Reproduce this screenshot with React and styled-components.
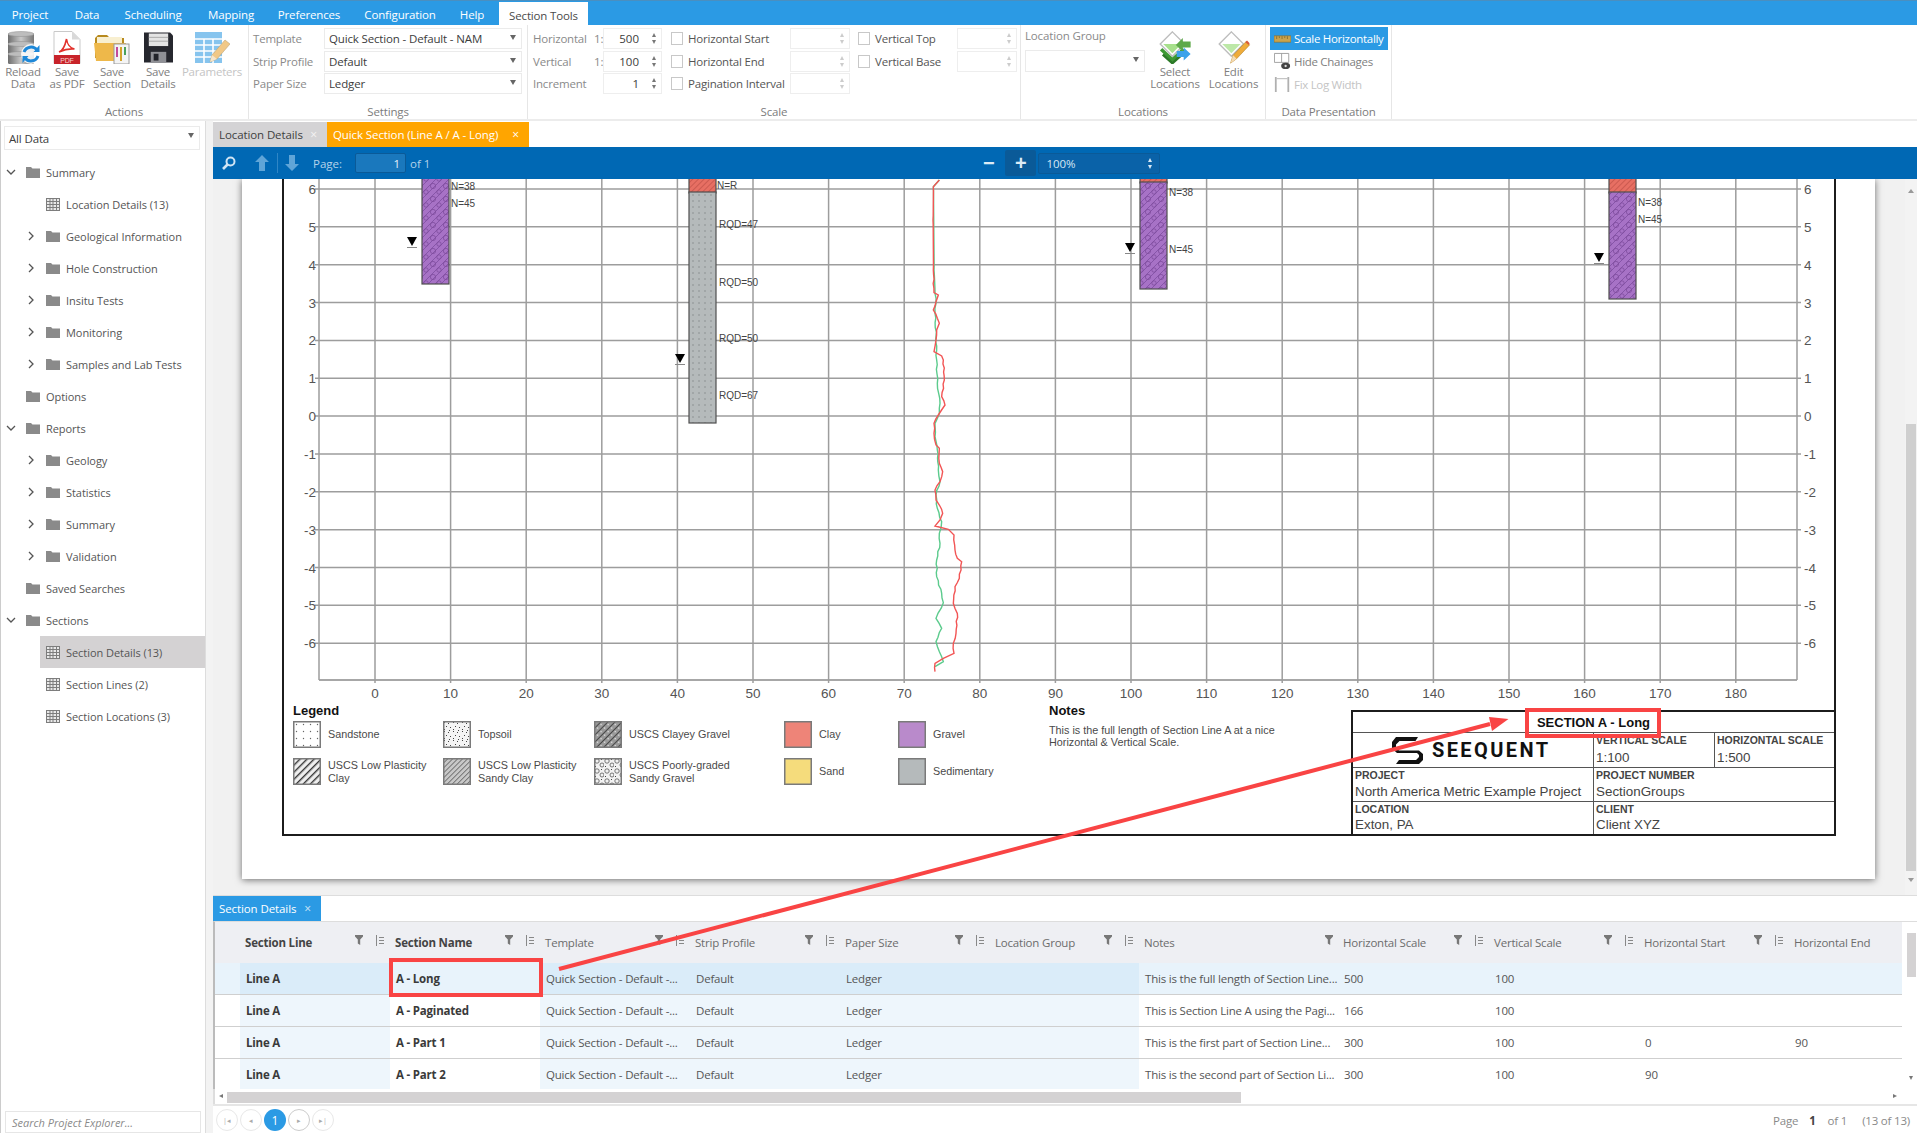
import styled, { createGlobalStyle } from "styled-components";

const GlobalStyle = createGlobalStyle`
  html, body { margin: 0; padding: 0; background: #fff; }
  body { font-family: "Open Sans", "Noto Sans", sans-serif; font-size: 11.5px; color: #444; }
  * { box-sizing: border-box; }
`;

const Page = styled.div`
  position: relative;
  width: 1917px;
  height: 1133px;
  overflow: hidden;
  display: flex;
  flex-direction: column;
`;

/* ---------- menu ---------- */
const MenuBar = styled.div`
  height: 25px;
  flex: none;
  display: flex;
  background: #2b9ae4;
  border-top: 1px solid #4a8fc0;
  padding-left: 1px;
`;

const MenuItem = styled.div`
  width: ${(p) => p.$w}px;
  display: flex;
  align-items: center;
  justify-content: center;
  padding-top: 3px;
  color: ${(p) => (p.$active ? "#4a4a4a" : "#fff")};
  background: ${(p) => (p.$active ? "#fff" : "transparent")};
  margin-top: ${(p) => (p.$active ? "1px" : "0")};
  margin-left: ${(p) => (p.$active ? "8px" : "0")};
  letter-spacing: -0.15px;
`;

/* ---------- ribbon ---------- */
const Ribbon = styled.div`
  height: 96px;
  flex: none;
  display: flex;
  background: #fff;
  border-bottom: 2px solid #ececec;
  color: #808080;
`;

const RibbonGroup = styled.div`
  width: ${(p) => p.$w}px;
  flex: none;
  display: flex;
  flex-direction: column;
  border-right: 1px solid #e6e6e6;
`;

const GroupBody = styled.div`
  flex: 1;
  display: flex;
  min-height: 0;
`;

const GroupLabel = styled.div`
  height: 21px;
  flex: none;
  padding-top: 7px;
  line-height: 14px;
  text-align: center;
  color: #7c7c7c;
  letter-spacing: -0.15px;
`;

const LargeButton = styled.div`
  width: ${(p) => p.$w}px;
  flex: none;
  display: flex;
  flex-direction: column;
  align-items: center;
  padding-top: 6px;
  color: ${(p) => (p.$faded ? "#c4c4c4" : "#808080")};
  line-height: 12px;
  text-align: center;
  letter-spacing: -0.2px;
  svg { height: 33px; margin-bottom: 2px; display: block; }
`;

const FormGrid = styled.div`
  display: grid;
  grid-template-columns: ${(p) => p.$cols};
  grid-auto-rows: 21px;
  row-gap: 1.5px;
  align-items: center;
  padding: 3px 0 0 ${(p) => p.$pad}px;
`;

const FieldLabel = styled.span`
  color: ${(p) => (p.$dark ? "#555" : "#8a8a8a")};
  white-space: nowrap;
  letter-spacing: -0.2px;
`;

const SelectBox = styled.div`
  position: relative;
  height: ${(p) => p.$h || 21}px;
  width: ${(p) => (p.$w ? p.$w + "px" : "auto")};
  border: 1.5px solid #ebebeb;
  background: #fff;
  color: #3c3c3c;
  display: flex;
  align-items: center;
  padding-left: 4px;
  letter-spacing: -0.15px;
  &::after {
    content: "";
    position: absolute;
    right: 5px;
    top: 6px;
    border-left: 3.5px solid transparent;
    border-right: 3.5px solid transparent;
    border-top: 5px solid #666;
  }
`;

const SidebarSelect = styled(SelectBox)`
  margin: -1px 0 0 3px;
`;

const SpinBox = styled.div`
  position: relative;
  height: 21px;
  border: 1.5px solid #eee;
  display: flex;
  align-items: center;
  justify-content: flex-end;
  padding-right: 22px;
  color: #3c3c3c;
  &::before, &::after {
    content: "";
    position: absolute;
    right: 5px;
    border-left: 2.5px solid transparent;
    border-right: 2.5px solid transparent;
  }
  &::before { top: 4px; border-bottom: 4px solid ${(p) => (p.$off ? "#ccc" : "#777")}; }
  &::after { bottom: 4px; border-top: 4px solid ${(p) => (p.$off ? "#ccc" : "#777")}; }
`;

const CheckBox = styled.span`
  width: 12px;
  height: 13px;
  border: 1px solid #c8c8c8;
  background: #fff;
  display: block;
`;

const LocationField = styled.div`
  width: 124px;
  flex: none;
  padding: 3px 0 0 4px;
  display: flex;
  flex-direction: column;
  gap: 7px;
  color: #8a8a8a;
  letter-spacing: -0.15px;
`;

const PresentationList = styled.div`
  display: flex;
  flex-direction: column;
  padding: 2px 0 0 4px;
`;

const PresentationItem = styled.div`
  width: 118px;
  height: 23px;
  display: flex;
  align-items: center;
  gap: 3px;
  padding-left: 4px;
  white-space: nowrap;
  letter-spacing: -0.3px;
  background: ${(p) => (p.$active ? "#2b9ae4" : "transparent")};
  color: ${(p) => (p.$active ? "#fff" : p.$faded ? "#c4c4c4" : "#808080")};
`;

/* ---------- body ---------- */
const Body = styled.div`
  flex: 1;
  display: flex;
  min-height: 0;
  background: #f3f3f3;
`;

const Sidebar = styled.aside`
  width: 206px;
  flex: none;
  background: #fff;
  border-left: 1px solid #ccc;
  border-right: 1px solid #ddd;
  display: flex;
  flex-direction: column;
  padding-top: 6px;
`;

const TreeList = styled.div`
  flex: 1;
  padding-top: 6px;
`;

const TreeRow = styled.div`
  height: 32px;
  display: flex;
  align-items: center;
  margin-left: ${(p) => (p.$leaf ? "39px" : "0")};
  padding-left: ${(p) => (p.$leaf ? 6 : 2 + p.$level * 20)}px;
  background: ${(p) => (p.$selected ? "#d4d2d3" : "transparent")};
  color: #555;
  font-size: 11px;
  letter-spacing: -0.05px;
`;

const ChevronSlot = styled.span`
  width: 16px;
  flex: none;
  margin-right: 7px;
  display: flex;
  justify-content: center;
`;

const TreeIcon = styled.span`
  width: 14px;
  flex: none;
  margin-right: 6px;
  display: flex;
`;

const SearchBox = styled.div`
  height: 22px;
  margin: 0 4px;
  width: 196px;
  border: 1.5px solid #e6e6e6;
  color: #8a8a8a;
  font-style: italic;
  display: flex;
  align-items: center;
  padding-left: 6px;
  font-size: 11px;
`;

const Main = styled.main`
  width: 1704px;
  margin-left: 7px;
  flex: none;
  display: flex;
  flex-direction: column;
  min-width: 0;
`;

const TabStrip = styled.div`
  height: ${(p) => p.$h}px;
  flex: none;
  display: flex;
  align-items: flex-end;
  background: #fff;
`;

const DocTab = styled.div`
  width: ${(p) => p.$w}px;
  height: 25px;
  display: flex;
  align-items: center;
  justify-content: space-between;
  padding: 0 10px 0 6px;
  background: ${(p) => p.$bg};
  color: ${(p) => p.$color};
  letter-spacing: -0.1px;
  span { color: ${(p) => p.$x}; font-size: 12px; }
`;

const Toolbar = styled.div`
  height: 32px;
  flex: none;
  display: flex;
  align-items: center;
  background: #0068b4;
  color: #b5d3ea;
`;

const ToolIcon = styled.span`
  display: flex;
  margin-left: ${(p) => p.$ml}px;
`;

const ToolDivider = styled.span`
  width: 1px;
  height: 20px;
  margin-left: 8px;
  background: #2f86c6;
`;

const PageInput = styled.div`
  width: 51px;
  height: 20px;
  margin: 0 4px 0 13px;
  background: #1a78bd;
  border: 1px solid #0a5a98;
  border-radius: 2px;
  color: #e8f2fa;
  display: flex;
  align-items: center;
  justify-content: flex-end;
  padding-right: 5px;
`;

const ZoomButton = styled.div`
  width: 31px;
  height: 26px;
  margin-left: ${(p) => p.$ml}px;
  background: ${(p) => (p.$filled ? "#0a5a98" : "transparent")};
  border-radius: 2px;
  display: flex;
  align-items: center;
  justify-content: center;
  color: #dcebf6;
  font: bold 20px "Liberation Sans", sans-serif;
`;

const ZoomSelect = styled.div`
  position: relative;
  width: 122px;
  height: 21px;
  margin-left: 2px;
  background: #0a62a8;
  border: 1px solid #0a5a98;
  border-radius: 2px;
  color: #d7e8f5;
  display: flex;
  align-items: center;
  padding-left: 7px;
  &::before, &::after {
    content: "";
    position: absolute;
    right: 7px;
    border-left: 2.5px solid transparent;
    border-right: 2.5px solid transparent;
  }
  &::before { top: 4px; border-bottom: 4px solid #d7e8f5; }
  &::after { bottom: 4px; border-top: 4px solid #d7e8f5; }
`;

/* ---------- viewer / paper ---------- */
const Viewer = styled.div`
  height: 716px;
  flex: none;
  display: flex;
  justify-content: space-between;
  background: #f1f1f1;
  overflow: hidden;
`;

const Paper = styled.div`
  width: 1633px;
  height: 700px;
  margin-left: 29px;
  flex: none;
  padding: 0 39px 43px 40px;
  background: #fff;
  box-shadow: 0 1px 7px rgba(0, 0, 0, 0.55);
  font-family: "Liberation Sans", Arial, sans-serif;
  color: #444;
`;

const Frame = styled.div`
  height: 657px;
  border: solid #1c1c1c;
  border-width: 0 2px 2px 2px;
  display: flex;
  flex-direction: column;
`;

const ChartSvg = styled.svg`
  display: block;
  flex: none;
  width: 1549px;
  height: 522px;
  font-family: "Liberation Sans", Arial, sans-serif;
`;

const PaperFooter = styled.div`
  flex: 1;
  display: flex;
  min-height: 0;
`;

const LegendBlock = styled.div`
  width: 765px;
  flex: none;
  padding-left: 9px;
`;

const PaperHeading = styled.div`
  font-size: 13px;
  font-weight: bold;
  color: #111;
  line-height: 17px;
  margin-top: 1px;
`;

const LegendGrid = styled.div`
  display: grid;
  grid-template-columns: 150px 151px 190px 114px 120px;
  grid-auto-rows: 27px;
  row-gap: 10px;
  margin-top: 2px;
`;

const LegendItem = styled.div`
  display: flex;
  align-items: center;
  gap: 7px;
  font-size: 10.8px;
  line-height: 12.5px;
  color: #4a4a4a;
`;

const LegendLine = styled.div`
  white-space: nowrap;
`;

const NotesBlock = styled.div`
  width: 240px;
  flex: none;
`;

const NotesText = styled.div`
  font-size: 10.8px;
  line-height: 12.2px;
  color: #4a4a4a;
  margin-top: 5px;
`;

const TitleBlock = styled.div`
  width: 483px;
  height: 124px;
  margin-left: auto;
  align-self: flex-end;
  border-top: 2px solid #1c1c1c;
  border-left: 2px solid #1c1c1c;
  display: grid;
  grid-template-columns: 241px 121px 119px;
  grid-template-rows: 21px 35px 34px 32px;
  color: #333;
`;

const TitleCell = styled.div`
  grid-column: ${(p) => p.$span || "auto"};
  border-right: ${(p) => (p.$last ? "none" : "1px solid #555")};
  border-bottom: ${(p) => (p.$end ? "none" : "1px solid #555")};
  padding: 1px 2px;
  display: flex;
  flex-direction: column;
  justify-content: space-between;
  min-width: 0;
`;

const SheetTitle = styled.div`
  height: 100%;
  display: flex;
  align-items: center;
  justify-content: center;
  font-size: 13px;
  font-weight: bold;
  color: #111;
`;

const LogoCell = styled.div`
  grid-column: 1;
  border-right: 1px solid #555;
  border-bottom: 1px solid #555;
  display: flex;
  align-items: center;
  padding-left: 39px;
  gap: 9px;
`;

const LogoWord = styled.span`
  font-family: Roboto, "Liberation Sans", sans-serif;
  font-weight: 700;
  font-size: 20px;
  letter-spacing: 2.4px;
  color: #111;
`;

const CellLabel = styled.div`
  font-size: 10.5px;
  font-weight: bold;
  line-height: 12px;
  color: #444;
  white-space: nowrap;
`;

const CellValue = styled.div`
  font-size: 13.4px;
  line-height: 16px;
  color: #444;
  white-space: nowrap;
`;

const ViewerScroll = styled.div`
  position: relative;
  width: 12px;
  flex: none;
  display: flex;
  flex-direction: column;
  background: #f3f3f3;
  padding: 245px 1px 24px 1px;
  div { flex: 1; background: #cfcfcf; }
  &::before, &::after {
    content: "";
    position: absolute;
    left: 3px;
    border-left: 3px solid transparent;
    border-right: 3px solid transparent;
  }
  &::before { top: 10px; border-bottom: 4px solid #999; }
  &::after { bottom: 13px; border-top: 4px solid #999; }
`;

/* ---------- details grid ---------- */
const DetailsPanel = styled.section`
  flex: 1;
  min-height: 0;
  display: flex;
  flex-direction: column;
  background: #fff;
  border-top: 1px solid #ddd;
`;

const GridArea = styled.div`
  position: relative;
  height: 168px;
  flex: none;
  border-left: 2px solid #bbb;
  border-top: 1px solid #ddd;
`;

const HeadRow = styled.div`
  display: flex;
  height: 41px;
  width: 1687px;
  background: #eeeff3;
`;

const HeadCell = styled.div`
  width: ${(p) => p.$w}px;
  flex: none;
  display: flex;
  align-items: center;
  padding: 0 ${(p) => (p.$noSort ? 5 : 6)}px 0 5px;
  font-weight: ${(p) => (p.$strong ? 700 : 400)};
  color: ${(p) => (p.$strong ? "#444" : "#6c6c6c")};
  letter-spacing: -0.2px;
  div { flex: 1; white-space: nowrap; }
  svg { flex: none; margin-bottom: 5px; }
  svg + svg { margin-left: 13px; }
`;

const DataRow = styled.div`
  display: flex;
  height: ${(p) => (p.$last ? 30 : 32)}px;
  width: 1687px;
  border-bottom: ${(p) => (p.$last ? "none" : "1px solid #cfcfcf")};
`;

const DataCell = styled.div`
  width: ${(p) => p.$w}px;
  flex: none;
  display: flex;
  align-items: center;
  padding-left: 6px;
  white-space: nowrap;
  overflow: hidden;
  font-weight: ${(p) => (p.$strong ? 700 : 400)};
  color: ${(p) => (p.$strong ? "#3a3a3a" : "#555")};
  letter-spacing: -0.2px;
  background: ${(p) =>
    p.$selected
      ? p.$band
        ? "#daecf9"
        : "#e8f3fb"
      : p.$band
        ? "#eef6fc"
        : "#fff"};
`;

const GridVScroll = styled.div`
  position: absolute;
  right: 0;
  top: 0;
  bottom: 0;
  width: 13px;
  background: #fff;
  padding-top: 11px;
  &::before {
    content: "";
    display: block;
    width: 9px;
    height: 44px;
    background: #d4d2d3;
    margin-left: 3px;
  }
  &::after {
    content: "";
    position: absolute;
    left: 5px;
    bottom: 9px;
    border-left: 2.5px solid transparent;
    border-right: 2.5px solid transparent;
    border-top: 4px solid #777;
  }
`;

const HScrollRow = styled.div`
  position: relative;
  height: 15px;
  flex: none;
  display: flex;
  align-items: center;
  padding: 1px 20px 0 12px;
  border-left: 2px solid #ddd;
  &::before, &::after {
    content: "";
    position: absolute;
    top: 5px;
    border-top: 2.5px solid transparent;
    border-bottom: 2.5px solid transparent;
  }
  &::before { left: 4px; border-right: 4px solid #777; }
  &::after { right: 20px; border-left: 4px solid #777; }
`;

const HScrollThumb = styled.div`
  width: 1014px;
  height: 11px;
  background: #d4d2d3;
`;

const Pager = styled.div`
  flex: 1;
  display: flex;
  align-items: center;
  border-top: 2px solid #e6e6e6;
  padding: 1px 0 0 3px;
  gap: 2px;
  color: #8a8a8a;
`;

const PageDot = styled.span`
  width: 22px;
  height: 22px;
  border-radius: 50%;
  border: ${(p) => (p.$active ? "none" : "1px solid " + (p.$strong ? "#ccc" : "#e8e8e8"))};
  background: ${(p) => (p.$active ? "#2b9ae4" : "#fff")};
  color: ${(p) => (p.$active ? "#fff" : "#aaa")};
  font-size: ${(p) => (p.$active ? "12px" : "7px")};
  display: flex;
  align-items: center;
  justify-content: center;
`;

const PagerText = styled.div`
  margin-left: auto;
  padding-right: 7px;
  display: flex;
  white-space: nowrap;
  letter-spacing: -0.2px;
  b { color: #444; margin: 0 12px 0 11px; }
  span { margin-left: 15px; }
`;

/* ---------- red mark-up on top of the screenshot ---------- */
const MarkBox = styled.div`
  position: absolute;
  left: ${(p) => p.$x}px;
  top: ${(p) => p.$y}px;
  width: ${(p) => p.$w}px;
  height: ${(p) => p.$h}px;
  border: 4px solid #f94444;
  pointer-events: none;
`;

const MarkArrow = styled.svg`
  position: absolute;
  left: 0;
  top: 0;
  width: 1917px;
  height: 1133px;
  pointer-events: none;
`;

/* ---------- icons ---------- */
const Chevron = ({ open }) => (
  <svg width="10" height="10" viewBox="0 0 10 10" fill="none" stroke="#555" strokeWidth="1.3">
    <path d={open ? "M1 3l4 4 4-4" : "M3 1l4 4-4 4"} />
  </svg>
);

const FolderIcon = () => (
  <svg width="14" height="12" viewBox="0 0 14 12">
    <path d="M0 1h5l1.5 1.5H14V12H0z" fill="#8a8a8a" />
  </svg>
);

const TableIcon = () => (
  <svg width="14" height="13" viewBox="0 0 14 13" fill="#fff" stroke="#7d7d7d" strokeWidth="1">
    <rect x=".5" y=".5" width="13" height="12" fill="#e8e8e8" />
    <path d="M.5 3.5h13M.5 6.5h13M.5 9.5h13M4 .5v12M7 .5v12M10.5 .5v12" />
  </svg>
);

const ReloadIcon = () => (
  <svg viewBox="0 0 36 33" width="36">
    <defs>
      <linearGradient id="dbGrey" x1="0" x2="1" y1="0" y2="0">
        <stop offset="0" stopColor="#6e6e6e" />
        <stop offset=".5" stopColor="#c8c8c8" />
        <stop offset="1" stopColor="#777" />
      </linearGradient>
    </defs>
    {[1, 11, 21].map((y) => (
      <g key={y}>
        <rect x="3" y={y + 2} width="26" height="9" fill="url(#dbGrey)" />
        <ellipse cx="16" cy={y + 11} rx="13" ry="2.5" fill="url(#dbGrey)" />
        <ellipse cx="16" cy={y + 2} rx="13" ry="2.5" fill="#bdbdbd" stroke="#8c8c8c" strokeWidth=".5" />
      </g>
    ))}
    <circle cx="26" cy="23" r="10" fill="#fff" opacity=".85" />
    <path d="M19 21a7.5 7.5 0 0 1 13-2" fill="none" stroke="#1e88d8" strokeWidth="3" />
    <path d="M33 25a7.5 7.5 0 0 1-13 2" fill="none" stroke="#1e88d8" strokeWidth="3" />
    <path d="M34.5 14v7h-6zM17.5 32v-7h6z" fill="#1e88d8" />
  </svg>
);

const PdfIcon = () => (
  <svg viewBox="0 0 28 33" width="28">
    <path d="M1 .5h18l8 8v24H1z" fill="#fff" stroke="#c9c9c9" />
    <path d="M19 .5v8h8z" fill="#d9d9d9" />
    <path
      d="M6 21c3-1 6-6 7.5-13 .5 4 3 9 8 10-5-.5-10 .5-15.5 3z"
      fill="none"
      stroke="#e2302a"
      strokeWidth="1.6"
    />
    <rect x="1" y="24" width="26" height="9" fill="#c8232a" />
    <text x="14" y="31.5" textAnchor="middle" fontSize="7" fill="#f5d0d0" fontFamily="Liberation Sans">
      PDF
    </text>
  </svg>
);

const SaveSectionIcon = () => (
  <svg viewBox="0 0 36 33" width="36">
    <path d="M1 7l3-3h9l3 3h14v20H1z" fill="#b88a1e" />
    <rect x="3" y="6" width="25" height="6" fill="#f8efd0" />
    <path d="M0 12h32l-2 18H2z" fill="#eeb84a" />
    <rect x="20" y="13" width="15" height="20" fill="#f4f4f4" stroke="#9a9a9a" />
    <path d="M23 16v10" stroke="#c34a9a" strokeWidth="2" />
    <path d="M27 16v14" stroke="#d4a32a" strokeWidth="2" />
    <path d="M31 16v8" stroke="#4aa05a" strokeWidth="2" />
  </svg>
);

const FloppyIcon = () => (
  <svg viewBox="0 0 30 33" width="29">
    <path d="M0 1h27l3 3v28H0z" fill="#26272e" />
    <rect x="5" y="2" width="20" height="13" fill="#e4e4e4" />
    <path d="M5 6h20M5 10h20" stroke="#a8a8a8" />
    <rect x="7" y="21" width="16" height="11" fill="#8f9096" />
    <rect x="10" y="23" width="5" height="7" fill="#22232a" />
  </svg>
);

const ParamsIcon = () => (
  <svg viewBox="0 0 36 33" width="36" opacity=".72">
    <rect x="1" y="1" width="27" height="31" fill="#58aee8" />
    <path d="M1 8h27M1 14h27M1 20h27M1 26h27M10 8v24M19 8v24" stroke="#fff" strokeWidth="1.6" />
    <path d="M16 31l2-7L31 9l5 4-13 15z" fill="#ecb45a" stroke="#a6844a" strokeWidth=".6" />
    <path d="M16 31l2-7 5 4z" fill="#f3ddbb" />
  </svg>
);

const Diamond = ({ fill }) => (
  <>
    <path d="M15 1l14 14-14 14L1 15z" fill="#fff" stroke="#bdbdbd" strokeWidth="1.6" />
    <path d="M4.5 15h21L15 25.5z" fill={fill} />
  </>
);

const SelectLocationsIcon = () => (
  <svg viewBox="0 0 36 38" width="36">
    <Diamond fill="#a7e08c" />
    <path d="M2 21l13 12 13-12" fill="none" stroke="#3e9a34" strokeWidth="4" />
    <path d="M4 27l11 10 11-10" fill="none" stroke="#2c7a28" strokeWidth="3" />
    <path d="M36 12v7h-9v5l-8-8 8-8v4z" fill="#5ea94a" />
    <path d="M20 23h8v-4l8 7.5-8 7.5v-4h-8z" fill="#3ca2ea" />
  </svg>
);

const EditLocationsIcon = () => (
  <svg viewBox="0 0 36 38" width="36">
    <Diamond fill="#bde8a8" />
    <path d="M14 37l3-9L32 12l4 4-15 16z" fill="#efac3a" stroke="#a8761f" strokeWidth=".6" />
    <path d="M14 37l3-9 4 4z" fill="#f4dcb4" />
    <path d="M31 13l2-2 3 3-1 2z" fill="#d85a3a" />
  </svg>
);

const RulerIcon = () => (
  <svg width="17" height="8" viewBox="0 0 19 8">
    <rect width="19" height="7" y=".5" fill="#c9a34d" stroke="#8a6d2a" strokeWidth=".7" />
    <path d="M3 1v3M6 1v2M9 1v3M12 1v2M15 1v3" stroke="#6f5620" strokeWidth=".7" />
  </svg>
);

const ChainageIcon = () => (
  <svg width="17" height="21" viewBox="0 0 19 21" fill="none">
    <path d="M.5 1.5h16v10H.5zM8.5 1.5v10" stroke="#9a9a9a" />
    <ellipse cx="13" cy="15.5" rx="5" ry="3.5" fill="#444" />
    <circle cx="13" cy="15.5" r="1.3" fill="#ddd" />
  </svg>
);

const FixWidthIcon = () => (
  <svg width="17" height="21" viewBox="0 0 19 21" fill="none" stroke="#b0b0b0" strokeWidth="2">
    <path d="M2 2v17M16 2v17" />
    <path d="M3 4h12" strokeWidth="1" />
  </svg>
);

const SearchIcon = () => (
  <svg width="14" height="14" viewBox="0 0 14 14" fill="none" stroke="#cfe4f4" strokeWidth="2">
    <circle cx="8.5" cy="5.5" r="4" />
    <path d="M5.5 8.5L1 13" strokeWidth="2.6" />
  </svg>
);

const ArrowIcon = ({ down }) => (
  <svg width="14" height="16" viewBox="0 0 14 16" fill="#5fa5d8">
    <path d={down ? "M4 0h6v9h4l-7 7-7-7h4z" : "M7 0l7 7h-4v9H4V7H0z"} />
  </svg>
);

const FunnelIcon = () => (
  <svg width="8" height="10" viewBox="0 0 8 10" fill="#777">
    <path d="M0 0h8v1.5L5.2 4.5V10L2.8 8.5v-4L0 1.5z" />
  </svg>
);

const SortIcon = () => (
  <svg width="8" height="11" viewBox="0 0 8 11" fill="none" stroke="#888" strokeWidth="1">
    <path d="M.5 0v11M3 2.5h5M3 5.5h5M3 8.5h5" />
  </svg>
);

const SeequentMark = () => (
  <svg width="31" height="27" viewBox="0 0 31 27" fill="#111">
    <path d="M4 0h22l-2.5 4H7.5L4 7.5V11l3 2.5H27l4 3.5v6l-4 4H4l3-4h17l3-3v-2l-2-2H5L0 11.5V5z" />
  </svg>
);

const MarkerIcon = ({ x, y }) => (
  <g transform={`translate(${x} ${y})`}>
    <path d="M-5 0h10l-5 9z" fill="#000" />
    <path d="M-5 10.5h10" stroke="#888" strokeWidth="1" />
  </g>
);

/* ---------- data ---------- */
const MENU = [
  ["Project", 58],
  ["Data", 56],
  ["Scheduling", 76],
  ["Mapping", 80],
  ["Preferences", 76],
  ["Configuration", 106],
  ["Help", 38],
];

const TREE = [
  { label: "Summary", level: 0, open: true },
  { label: "Location Details (13)", leaf: true },
  { label: "Geological Information", level: 1 },
  { label: "Hole Construction", level: 1 },
  { label: "Insitu Tests", level: 1 },
  { label: "Monitoring", level: 1 },
  { label: "Samples and Lab Tests", level: 1 },
  { label: "Options", level: 0, bare: true },
  { label: "Reports", level: 0, open: true },
  { label: "Geology", level: 1 },
  { label: "Statistics", level: 1 },
  { label: "Summary", level: 1 },
  { label: "Validation", level: 1 },
  { label: "Saved Searches", level: 0, bare: true },
  { label: "Sections", level: 0, open: true },
  { label: "Section Details (13)", leaf: true, selected: true },
  { label: "Section Lines (2)", leaf: true },
  { label: "Section Locations (3)", leaf: true },
];

const COLUMNS = [
  { title: "", w: 25, icons: false },
  { title: "Section Line", w: 150, strong: true, band: true },
  { title: "Section Name", w: 150, strong: true },
  { title: "Template", w: 150, band: true },
  { title: "Strip Profile", w: 150, band: true },
  { title: "Paper Size", w: 150, band: true },
  { title: "Location Group", w: 149, band: true },
  { title: "Notes", w: 199, noSort: true },
  { title: "Horizontal Scale", w: 151 },
  { title: "Vertical Scale", w: 150 },
  { title: "Horizontal Start", w: 150 },
  { title: "Horizontal End", w: 113, icons: false },
];

const QS = "Quick Section - Default -...";
const ROWS = [
  ["", "Line A", "A - Long", QS, "Default", "Ledger", "", "This is the full length of Section Line...", "500", "100", "", ""],
  ["", "Line A", "A - Paginated", QS, "Default", "Ledger", "", "This is Section Line A using the Pagi...", "166", "100", "", ""],
  ["", "Line A", "A - Part 1", QS, "Default", "Ledger", "", "This is the first part of Section Line...", "300", "100", "0", "90"],
  ["", "Line A", "A - Part 2", QS, "Default", "Ledger", "", "This is the second part of Section Li...", "300", "100", "90", ""],
];

const LEGEND = [
  ["sandstone", ["Sandstone"]],
  ["topsoil", ["Topsoil"]],
  ["clayey", ["USCS Clayey Gravel"]],
  ["#ee8478", ["Clay"]],
  ["#b98acb", ["Gravel"]],
  ["lowplast", ["USCS Low Plasticity", "Clay"]],
  ["sandyclay", ["USCS Low Plasticity", "Sandy Clay"]],
  ["poorgravel", ["USCS Poorly-graded", "Sandy Gravel"]],
  ["#f5dc7c", ["Sand"]],
  ["#b5babb", ["Sedimentary"]],
];

const RED_LOG = [
  [178,30],[160,50],[159,150],[160,300],[162,368],[175,375],[168,395],[160,420],[172,445],[178,460],[170,480],[168,510],
  [162,545],[185,558],[190,570],[193,630],[185,680],[195,705],[175,735],[162,760],[164,775],[162,790],[168,825],[178,835],
  [178,880],[188,905],[180,935],[165,960],[168,990],[178,1005],[188,1030],[180,1050],[165,1068],[205,1078],[222,1095],
  [225,1140],[232,1165],[245,1175],[238,1225],[225,1250],[220,1300],[232,1330],[228,1390],[220,1420],[222,1450],[190,1465],
  [165,1480],[165,1505],
];

const GREEN_LOG = [
  [178,30],[160,50],[162,300],[165,370],[168,400],[165,430],[168,500],[170,570],[172,640],[176,670],[180,700],[178,730],
  [165,760],[165,800],[172,840],[175,900],[180,935],[168,975],[172,1015],[185,1055],[178,1090],[180,1120],[170,1170],
  [170,1220],[185,1270],[190,1298],[168,1345],[185,1375],[168,1415],[185,1460],[190,1475],[165,1490],
];

// split long segments and add a small deterministic wobble so the traces look like log data
const logPoints = (pts, seed) => {
  const out = [];
  pts.forEach(([x, y], i) => {
    const next = pts[i + 1];
    out.push(`${880 + x / 3},${170 + y / 3}`);
    if (!next) return;
    const steps = Math.floor((next[1] - y) / 12);
    for (let s = 1; s < steps; s++) {
      const t = s / steps;
      const wob = i < 3 ? 0.15 : 0.6 * Math.sin(seed + (y + t * (next[1] - y)) * 0.31);
      out.push(`${880 + (x + t * (next[0] - x)) / 3 + wob},${170 + (y + t * (next[1] - y)) / 3}`);
    }
  });
  return out.join(" ");
};

const Y_TOP = 189;
const Y_STEP = 37.85;
const X_ZERO = 375;
const X_STEP = 75.6;
const LEFT = 319;
const RIGHT = 1797;
const BASE = 680;

const yLabels = Array.from({ length: 13 }, (_, i) => 6 - i);
const xLabels = Array.from({ length: 19 }, (_, i) => i * 10);

const STRIPS = [
  { x: 422, w: 27, parts: [[179, 284, "url(#purpleHatch)"]] },
  { x: 689, w: 27, parts: [[179, 193, "url(#redHatch)"], [193, 423, "url(#greyDots)"]] },
  { x: 1140, w: 27, parts: [[179, 183, "url(#redHatch)"], [183, 289, "url(#purpleHatch)"]] },
  { x: 1609, w: 27, parts: [[179, 193, "url(#redHatch)"], [193, 299, "url(#purpleHatch)"]] },
];

const STRIP_NOTES = [
  [451, 190, "N=38"], [451, 207, "N=45"],
  [717, 189, "N=R"], [719, 228, "RQD=47"], [719, 286, "RQD=50"], [719, 342, "RQD=50"], [719, 399, "RQD=67"],
  [1169, 196, "N=38"], [1169, 253, "N=45"],
  [1638, 206, "N=38"], [1638, 223, "N=45"],
];

const SwatchSvg = styled.svg`
  flex: none;
`;

const Swatch = ({ kind }) => {
  const solid = kind.startsWith("#");
  return (
    <SwatchSvg width="28" height="27" viewBox="0 0 28 27">
      <rect x=".75" y=".75" width="26.5" height="25.5" fill={solid ? kind : `url(#lg-${kind})`} stroke="#7a7a7a" strokeWidth="1.5" />
    </SwatchSvg>
  );
};

const ChartDefs = () => (
  <defs>
    <pattern id="purpleHatch" width="13" height="13" patternUnits="userSpaceOnUse">
      <rect width="13" height="13" fill="#a772c6" />
      <path d="M-1 5L5-1M-1 11L11-1M3 14L14 3M9 14l5-5" stroke="#8655a8" strokeWidth="1" />
      <circle cx="4" cy="4" r="2.6" fill="none" stroke="#7d4a9c" strokeWidth=".8" />
      <circle cx="10" cy="10" r="2.2" fill="none" stroke="#7d4a9c" strokeWidth=".8" />
    </pattern>
    <pattern id="redHatch" width="4" height="4" patternUnits="userSpaceOnUse" patternTransform="rotate(45)">
      <rect width="4" height="4" fill="#e76f63" />
      <path d="M0 0v4" stroke="#b84b42" strokeWidth="1.2" />
    </pattern>
    <pattern id="greyDots" width="6" height="6" patternUnits="userSpaceOnUse">
      <rect width="6" height="6" fill="#b5babb" />
      <circle cx="3" cy="3" r=".7" fill="#7d8283" />
    </pattern>
    <pattern id="lg-sandstone" width="7" height="7" patternUnits="userSpaceOnUse">
      <rect width="7" height="7" fill="#fff" />
      <circle cx="3.5" cy="3.5" r=".7" fill="#666" />
    </pattern>
    <pattern id="lg-topsoil" width="9" height="9" patternUnits="userSpaceOnUse">
      <rect width="9" height="9" fill="#f4f4f4" />
      <path d="M1 1h1v1H1zM5 2h1v1H5zM3 5h1v1H3zM7 6h1v1H7zM1 8h1v1H1zM6 0h1v1H6z" fill="#444" />
    </pattern>
    <pattern id="lg-clayey" width="5" height="5" patternUnits="userSpaceOnUse" patternTransform="rotate(45)">
      <rect width="5" height="5" fill="#999" />
      <path d="M0 0v5" stroke="#333" strokeWidth="1.6" />
      <circle cx="2.5" cy="2.5" r=".8" fill="#eee" />
    </pattern>
    <pattern id="lg-lowplast" width="5" height="5" patternUnits="userSpaceOnUse" patternTransform="rotate(45)">
      <rect width="5" height="5" fill="#eee" />
      <path d="M0 0v5" stroke="#3a3a3a" strokeWidth="2.8" />
    </pattern>
    <pattern id="lg-sandyclay" width="3.5" height="3.5" patternUnits="userSpaceOnUse" patternTransform="rotate(45)">
      <rect width="3.5" height="3.5" fill="#c8c8c8" />
      <path d="M0 0v3.5" stroke="#555" strokeWidth="1.4" />
    </pattern>
    <pattern id="lg-poorgravel" width="10" height="10" patternUnits="userSpaceOnUse">
      <rect width="10" height="10" fill="#f2f2f2" />
      <circle cx="3" cy="3" r="2.2" fill="none" stroke="#555" strokeWidth=".8" />
      <circle cx="8" cy="7" r="2" fill="none" stroke="#555" strokeWidth=".8" />
      <path d="M7 1h1v1H7zM1 8h1v1H1z" fill="#444" />
    </pattern>
  </defs>
);

const Chart = () => (
  <ChartSvg viewBox="284 179 1549 522">
    <ChartDefs />
    {yLabels.map((v, i) => {
      const y = Y_TOP + i * Y_STEP;
      return (
        <g key={v}>
          <path d={`M${LEFT - 4} ${y}H${RIGHT + 4}`} stroke="#9d9d9d" strokeWidth="1.5" />
          <text x={LEFT - 3} y={y + 5} textAnchor="end" fontSize="13.5" fill="#555">{v}</text>
          <text x={RIGHT + 7} y={y + 5} fontSize="13.5" fill="#555">{v}</text>
        </g>
      );
    })}
    <path d={`M${LEFT} ${BASE}H${RIGHT}`} stroke="#8a8a8a" strokeWidth="1.5" />
    {[LEFT, RIGHT].map((x) => (
      <path key={x} d={`M${x} 179V${BASE}`} stroke="#9d9d9d" strokeWidth="1.5" />
    ))}
    {xLabels.map((v, i) => {
      const x = X_ZERO + i * X_STEP;
      return (
        <g key={v}>
          <path d={`M${x} 179V${BASE + 3}`} stroke="#9d9d9d" strokeWidth="1.5" />
          <text x={x} y={BASE + 18} textAnchor="middle" fontSize="13.5" fill="#555">{v}</text>
        </g>
      );
    })}
    {STRIPS.map((s) =>
      s.parts.map(([y1, y2, fill]) => (
        <rect key={`${s.x}-${y1}`} x={s.x} y={y1 - 1} width={s.w} height={y2 - y1 + 1} fill={fill} stroke="#4f4f4f" strokeWidth="1.2" />
      ))
    )}
    {STRIP_NOTES.map(([x, y, t]) => (
      <text key={`${x}-${y}`} x={x} y={y} fontSize="10" fill="#444">{t}</text>
    ))}
    <MarkerIcon x={412} y={237} />
    <MarkerIcon x={680} y={354} />
    <MarkerIcon x={1130} y={243} />
    <MarkerIcon x={1599} y={253} />
    <polyline points={logPoints(GREEN_LOG, 2)} fill="none" stroke="#5ccb8d" strokeWidth="1.4" />
    <polyline points={logPoints(RED_LOG, 0)} fill="none" stroke="#f25555" strokeWidth="1.4" />
  </ChartSvg>
);

const App = () => (
  <Page>
    <GlobalStyle />
    <MenuBar>
      {MENU.map(([label, w]) => (
        <MenuItem key={label} $w={w}>{label}</MenuItem>
      ))}
      <MenuItem $w={89} $active>Section Tools</MenuItem>
    </MenuBar>

    <Ribbon>
      <RibbonGroup $w={249}>
        <GroupBody>
          <LargeButton $w={46}><ReloadIcon />Reload<br />Data</LargeButton>
          <LargeButton $w={42}><PdfIcon />Save<br />as PDF</LargeButton>
          <LargeButton $w={48}><SaveSectionIcon />Save<br />Section</LargeButton>
          <LargeButton $w={44}><FloppyIcon />Save<br />Details</LargeButton>
          <LargeButton $w={64} $faded><ParamsIcon />Parameters</LargeButton>
        </GroupBody>
        <GroupLabel>Actions</GroupLabel>
      </RibbonGroup>

      <RibbonGroup $w={279}>
        <GroupBody>
          <FormGrid $cols="71px 198px" $pad={4}>
            <FieldLabel>Template</FieldLabel>
            <SelectBox>Quick Section - Default - NAM</SelectBox>
            <FieldLabel>Strip Profile</FieldLabel>
            <SelectBox>Default</SelectBox>
            <FieldLabel>Paper Size</FieldLabel>
            <SelectBox>Ledger</SelectBox>
          </FormGrid>
        </GroupBody>
        <GroupLabel>Settings</GroupLabel>
      </RibbonGroup>

      <RibbonGroup $w={493}>
        <GroupBody>
          <FormGrid $cols="61px 9px 59px 9px 12px 5px 102px 60px 8px 12px 5px 82px 60px" $pad={5}>
            <FieldLabel>Horizontal</FieldLabel><FieldLabel>1:</FieldLabel><SpinBox>500</SpinBox><i />
            <CheckBox /><i /><FieldLabel $dark>Horizontal Start</FieldLabel><SpinBox $off /><i />
            <CheckBox /><i /><FieldLabel $dark>Vertical Top</FieldLabel><SpinBox $off />

            <FieldLabel>Vertical</FieldLabel><FieldLabel>1:</FieldLabel><SpinBox>100</SpinBox><i />
            <CheckBox /><i /><FieldLabel $dark>Horizontal End</FieldLabel><SpinBox $off /><i />
            <CheckBox /><i /><FieldLabel $dark>Vertical Base</FieldLabel><SpinBox $off />

            <FieldLabel>Increment</FieldLabel><i /><SpinBox>1</SpinBox><i />
            <CheckBox /><i /><FieldLabel $dark>Pagination Interval</FieldLabel><SpinBox $off />
          </FormGrid>
        </GroupBody>
        <GroupLabel>Scale</GroupLabel>
      </RibbonGroup>

      <RibbonGroup $w={245}>
        <GroupBody>
          <LocationField>
            Location Group
            <SelectBox $w={120} $h={22} />
          </LocationField>
          <LargeButton $w={60}><SelectLocationsIcon />Select<br />Locations</LargeButton>
          <LargeButton $w={57}><EditLocationsIcon />Edit<br />Locations</LargeButton>
        </GroupBody>
        <GroupLabel>Locations</GroupLabel>
      </RibbonGroup>

      <RibbonGroup $w={126}>
        <GroupBody>
          <PresentationList>
            <PresentationItem $active><RulerIcon />Scale Horizontally</PresentationItem>
            <PresentationItem><ChainageIcon />Hide Chainages</PresentationItem>
            <PresentationItem $faded><FixWidthIcon />Fix Log Width</PresentationItem>
          </PresentationList>
        </GroupBody>
        <GroupLabel>Data Presentation</GroupLabel>
      </RibbonGroup>
    </Ribbon>

    <Body>
      <Sidebar>
        <SidebarSelect $w={196} $h={24}>All Data</SidebarSelect>
        <TreeList>
          {TREE.map((item, i) => (
            <TreeRow key={i} $level={item.level} $leaf={item.leaf} $selected={item.selected}>
              {!item.leaf && (
                <ChevronSlot>{!item.bare && <Chevron open={item.open} />}</ChevronSlot>
              )}
              <TreeIcon>{item.leaf ? <TableIcon /> : <FolderIcon />}</TreeIcon>
              {item.label}
            </TreeRow>
          ))}
        </TreeList>
        <SearchBox>Search Project Explorer...</SearchBox>
      </Sidebar>

      <Main>
        <TabStrip $h={26}>
          <DocTab $w={114} $bg="#d4d3d5" $color="#3f3f3f" $x="#f4f4f4">Location Details<span>×</span></DocTab>
          <DocTab $w={202} $bg="#ffa500" $color="#fff" $x="#fff">Quick Section (Line A / A - Long)<span>×</span></DocTab>
        </TabStrip>

        <Toolbar>
          <ToolIcon $ml={9}><SearchIcon /></ToolIcon>
          <ToolIcon $ml={19}><ArrowIcon /></ToolIcon>
          <ToolDivider />
          <ToolIcon $ml={7}><ArrowIcon down /></ToolIcon>
          <ToolIcon $ml={14}>Page:</ToolIcon>
          <PageInput>1</PageInput>
          of 1
          <ZoomButton $ml={543}>−</ZoomButton>
          <ZoomButton $filled $ml={1}>+</ZoomButton>
          <ZoomSelect>100%</ZoomSelect>
        </Toolbar>

        <Viewer>
          <Paper>
            <Frame>
              <Chart />
              <PaperFooter>
                <LegendBlock>
                  <PaperHeading>Legend</PaperHeading>
                  <LegendGrid>
                    {LEGEND.map(([kind, lines]) => (
                      <LegendItem key={lines.join(" ")}>
                        <Swatch kind={kind} />
                        <span>
                          {lines.map((t) => (
                            <LegendLine key={t}>{t}</LegendLine>
                          ))}
                        </span>
                      </LegendItem>
                    ))}
                  </LegendGrid>
                </LegendBlock>
                <NotesBlock>
                  <PaperHeading>Notes</PaperHeading>
                  <NotesText>
                    This is the full length of Section Line A at a nice
                    <br />
                    Horizontal &amp; Vertical Scale.
                  </NotesText>
                </NotesBlock>
                <TitleBlock>
                  <TitleCell $span="1 / 4" $last><SheetTitle>SECTION A - Long</SheetTitle></TitleCell>
                  <LogoCell><SeequentMark /><LogoWord>SEEQUENT</LogoWord></LogoCell>
                  <TitleCell><CellLabel>VERTICAL SCALE</CellLabel><CellValue>1:100</CellValue></TitleCell>
                  <TitleCell $last><CellLabel>HORIZONTAL SCALE</CellLabel><CellValue>1:500</CellValue></TitleCell>
                  <TitleCell><CellLabel>PROJECT</CellLabel><CellValue>North America Metric Example Project</CellValue></TitleCell>
                  <TitleCell $span="2 / 4" $last><CellLabel>PROJECT NUMBER</CellLabel><CellValue>SectionGroups</CellValue></TitleCell>
                  <TitleCell $end><CellLabel>LOCATION</CellLabel><CellValue>Exton, PA</CellValue></TitleCell>
                  <TitleCell $span="2 / 4" $last $end><CellLabel>CLIENT</CellLabel><CellValue>Client XYZ</CellValue></TitleCell>
                </TitleBlock>
              </PaperFooter>
            </Frame>
          </Paper>
          <ViewerScroll><div /></ViewerScroll>
        </Viewer>

        <DetailsPanel>
          <TabStrip $h={25}>
            <DocTab $w={108} $bg="#2b9ae4" $color="#fff" $x="#cfe6f7">Section Details<span>×</span></DocTab>
          </TabStrip>
          <GridArea>
            <HeadRow>
              {COLUMNS.map((c) => (
                <HeadCell key={c.title} $w={c.w} $strong={c.strong} $noSort={c.noSort}>
                  <div>{c.title}</div>
                  {c.icons !== false && <FunnelIcon />}
                  {c.icons !== false && !c.noSort && <SortIcon />}
                </HeadCell>
              ))}
            </HeadRow>
            {ROWS.map((row, r) => (
              <DataRow key={row[2]} $last={r === ROWS.length - 1}>
                {row.map((value, c) => (
                  <DataCell
                    key={c}
                    $w={COLUMNS[c].w}
                    $strong={COLUMNS[c].strong}
                    $band={COLUMNS[c].band}
                    $selected={r === 0}
                  >
                    {value}
                  </DataCell>
                ))}
              </DataRow>
            ))}
            <GridVScroll />
          </GridArea>
          <HScrollRow><HScrollThumb /></HScrollRow>
          <Pager>
            <PageDot>|◂</PageDot>
            <PageDot>◂</PageDot>
            <PageDot $active>1</PageDot>
            <PageDot $strong>▸</PageDot>
            <PageDot>▸|</PageDot>
            <PagerText>Page<b>1</b>of 1<span>(13 of 13)</span></PagerText>
          </Pager>
        </DetailsPanel>
      </Main>
    </Body>

    <MarkBox $x={1525} $y={708} $w={136} $h={30} />
    <MarkBox $x={389} $y={958} $w={154} $h={39} />
    <MarkArrow viewBox="0 0 1917 1133">
      <path d="M559 969L1490 724" stroke="#f94444" strokeWidth="4" />
      <path d="M1508.5 719L1489 717L1492 731z" fill="#f94444" />
    </MarkArrow>
  </Page>
);

export default App;
